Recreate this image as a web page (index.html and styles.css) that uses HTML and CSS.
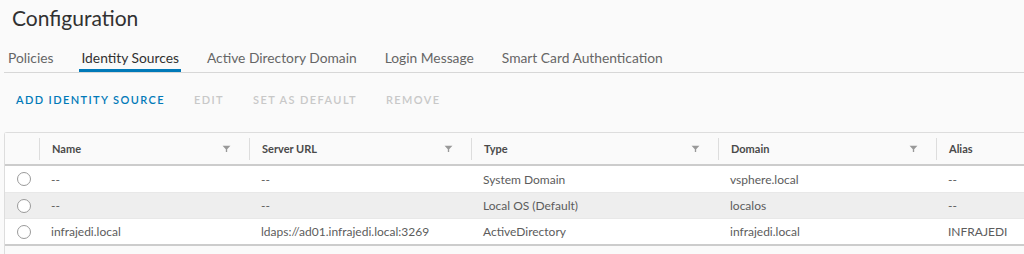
FILE: index.html
```html
<!DOCTYPE html>
<html>
<head>
<meta charset="utf-8">
<link rel="stylesheet" href="styles.css">
</head>
<body>
<div class="page">
  <h1 class="title">Configuration</h1>
  <nav class="tabs">
    <span class="tab">Policies</span>
    <span class="tab active">Identity Sources</span>
    <span class="tab">Active Directory Domain</span>
    <span class="tab">Login Message</span>
    <span class="tab">Smart Card Authentication</span>
  </nav>
  <div class="toolbar">
    <span class="btn primary">ADD IDENTITY SOURCE</span>
    <span class="btn">EDIT</span>
    <span class="btn">SET AS DEFAULT</span>
    <span class="btn">REMOVE</span>
  </div>
  <div class="grid">
    <div class="row head">
      <div class="cell sel"></div>
      <div class="cell hc"><span>Name</span><svg class="filt" viewBox="0 0 8 8"><path d="M0.5 1.5h7L4.6 4.6V7.2H3.4V4.6z"/></svg></div>
      <div class="cell hc"><span>Server URL</span><svg class="filt" viewBox="0 0 8 8"><path d="M0.5 1.5h7L4.6 4.6V7.2H3.4V4.6z"/></svg></div>
      <div class="cell hc"><span>Type</span><svg class="filt" viewBox="0 0 8 8"><path d="M0.5 1.5h7L4.6 4.6V7.2H3.4V4.6z"/></svg></div>
      <div class="cell hc"><span>Domain</span><svg class="filt" viewBox="0 0 8 8"><path d="M0.5 1.5h7L4.6 4.6V7.2H3.4V4.6z"/></svg></div>
      <div class="cell hc"><span>Alias</span></div>
    </div>
    <div class="row">
      <div class="cell sel"><span class="radio"></span></div>
      <div class="cell">--</div>
      <div class="cell">--</div>
      <div class="cell">System Domain</div>
      <div class="cell">vsphere.local</div>
      <div class="cell">--</div>
    </div>
    <div class="row alt">
      <div class="cell sel"><span class="radio"></span></div>
      <div class="cell">--</div>
      <div class="cell">--</div>
      <div class="cell">Local OS (Default)</div>
      <div class="cell">localos</div>
      <div class="cell">--</div>
    </div>
    <div class="row">
      <div class="cell sel"><span class="radio"></span></div>
      <div class="cell">infrajedi.local</div>
      <div class="cell">ldaps://ad01.infrajedi.local:3269</div>
      <div class="cell">ActiveDirectory</div>
      <div class="cell">infrajedi.local</div>
      <div class="cell">INFRAJEDI</div>
    </div>
    <div class="foot"></div>
  </div>
</div>
</body>
</html>
```
FILE: styles.css
```css
html, body {
  margin: 0;
  padding: 0;
  background: #fafafa;
  overflow: hidden;
}
body {
  font-family: Lato, "Open Sans", sans-serif;
  color: #565656;
}
.page {
  padding: 0 0 0 4px;
  width: 1060px;
}
.title {
  margin: 0;
  padding: 6px 0 0 8px;
  height: 34px;
  box-sizing: border-box;
  font-size: 21px;
  font-weight: 400;
  color: #313131;
  line-height: 24px;
}
.tabs {
  display: flex;
  gap: 28px;
  margin-top: 11px;
  padding-left: 4px;
  border-bottom: 1px solid #d7d7d7;
  height: 27px;
}
.tab {
  font-size: 13.8px;
  color: #666;
  line-height: 25px;
  padding: 0;
  height: 27px;
  box-sizing: border-box;
}
.tab.active {
  color: #313131;
  border-bottom: 3px solid #0079b8;
  margin: 0 -2px;
  padding: 0 2px;
}
.toolbar {
  display: flex;
  gap: 29px;
  padding: 19px 0 0 12px;
  height: 59px;
  box-sizing: border-box;
}
.btn {
  font-size: 11px;
  font-weight: 600;
  letter-spacing: 1.4px;
  color: #c8c8c8;
  line-height: 16px;
}
.btn.primary {
  color: #0079b8;
}
.grid {
  border: 1px solid #ddd;
  border-right: none;
  border-radius: 3px 0 0 3px;
  background: #fff;
}
.row {
  display: grid;
  grid-template-columns: 34px 210px 222px 247px 218px 1fr;
  height: 26px;
  box-sizing: border-box;
  border-top: 1px solid #e8e8e8;
  align-items: center;
  font-size: 12px;
  color: #5c5c5c;
}
.row.alt {
  background: #eee;
}
.row.head {
  height: 33px;
  border-top: none;
  border-bottom: 2px solid #ccc;
  background: #fafafa;
  font-weight: 700;
  font-size: 11px;
  color: #4a4a4a;
}
.row.head + .row {
  border-top: none;
}
.cell {
  padding-left: 12px;
  white-space: nowrap;
  height: 100%;
  display: flex;
  align-items: center;
  box-sizing: border-box;
}
.hc {
  border-left: 1px solid #ddd;
  height: 22px;
  justify-content: space-between;
  padding-right: 18px;
}
.filt {
  width: 9px;
  height: 9px;
  fill: #999;
}
.radio {
  width: 14px;
  height: 14px;
  border: 1px solid #9a9a9a;
  border-radius: 50%;
  box-sizing: border-box;
  background: #fff;
}
.foot {
  height: 12px;
  border-top: 2px solid #ccc;
  background: #fafafa;
}
```
